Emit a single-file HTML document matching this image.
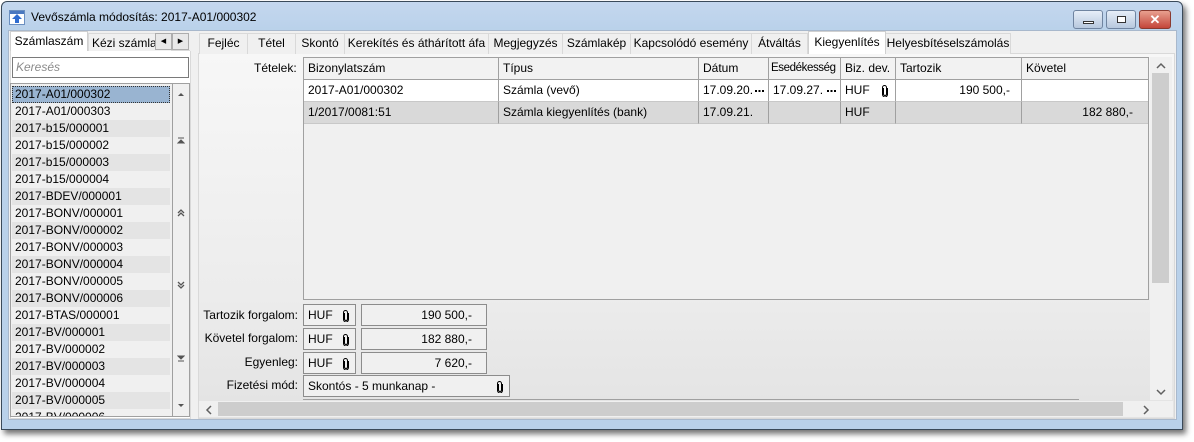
<!DOCTYPE html>
<html><head><meta charset="utf-8"><style>
*{box-sizing:border-box;margin:0;padding:0}
body{width:1194px;height:442px;background:#fff;position:relative;overflow:hidden;font-family:"Liberation Sans",sans-serif;font-size:12px;color:#000}
.a{position:absolute}
.win{left:1px;top:1px;width:1182px;height:429px;border:1px solid #3a4a5a;border-radius:6px 6px 0 0;background:linear-gradient(#c4d7ee,#b9d1ea 30px);box-shadow:3px 4px 6px rgba(0,0,0,.55)}
.client{left:8px;top:30px;width:1169px;height:390px;background:#f0f0f0;border:1px solid #a8b8cc}
.t{white-space:nowrap;line-height:17px}
.tab{position:absolute;top:33px;height:21px;border:1px solid #d9d9d9;border-bottom:none;background:#f0f0f0;text-align:center;line-height:19px;font-size:12px;white-space:nowrap;overflow:hidden}
.item{position:absolute;left:12px;width:158px;height:17px;line-height:17px;padding-left:3px;font-size:12px}
.cell{position:absolute;border-right:1px solid #a0a0a0;border-bottom:1px solid #c8c8c8;padding:0 4px;line-height:21px;height:22px;white-space:nowrap;overflow:hidden}
.box{position:absolute;height:22px;border:1px solid #8c8c8c;background:#f0f0f0;line-height:20px;padding:0 4px;white-space:nowrap}
.lbl{position:absolute;width:100px;text-align:right;left:198px;line-height:22px}
.clip{position:absolute;right:5px;top:5px;width:8px;height:12px}
.dots{position:absolute;right:4px;top:10px;width:9px;height:2px;background:repeating-linear-gradient(90deg,#000 0 2px,transparent 2px 3.5px)}
.sa{position:absolute;left:4px;width:8px;height:8px}
</style></head><body>
<div class="a win"></div>
<svg class="a" style="left:9px;top:9px" width="16" height="16"><rect x="0.5" y="1.5" width="15" height="14" fill="#fff" stroke="#6b8fc0"/><rect x="1" y="2" width="14" height="3" fill="#4a78c0"/><path d="M8 5 L13 10 H10 V14 H6 V10 H3 Z" fill="#2f6cd0"/></svg>
<div class="a t" style="left:31px;top:9px;font-size:12px">Vevőszámla módosítás: 2017-A01/000302</div>
<div class="a" style="left:1073px;top:10px;width:30px;height:19px;border:1px solid #6f84a0;border-radius:3px;background:linear-gradient(#e6eef8,#b7c8de)"><div class="a" style="left:9px;top:10px;width:11px;height:3px;border:1px solid #333;background:#fff"></div></div>
<div class="a" style="left:1106px;top:10px;width:30px;height:19px;border:1px solid #6f84a0;border-radius:3px;background:linear-gradient(#e6eef8,#b7c8de)"><div class="a" style="left:10px;top:5px;width:9px;height:7px;border:1px solid #333;background:#fff"></div></div>
<div class="a" style="left:1139px;top:10px;width:32px;height:19px;border:1px solid #8a3a30;border-radius:3px;background:linear-gradient(#e8a090,#c4463a);color:#fff;font-weight:bold;text-align:center;line-height:17px;font-size:13px">✕</div>
<div class="a client"></div>
<svg width="0" height="0" style="position:absolute"><defs><symbol id="pc" viewBox="0 0 8 12"><path d="M2.5 3 V9 A1.5 1.5 0 0 0 5.5 9 V2.5 A2 2 0 0 0 1.5 2.5 V9.5 A2.5 2.5 0 0 0 6.5 9.5 V3" fill="none" stroke="#000" stroke-width="1"/></symbol></defs></svg>
<!-- left tabs -->
<div class="a" style="left:10px;top:50px;width:180px;height:1px;background:#d9d9d9"></div>
<div class="tab" style="left:88px;width:84px;text-align:left;padding-left:3px;top:33px">Kézi számlas</div>
<div class="tab" style="left:10px;width:78px;top:31px;height:21px;background:#fff;border-color:#d0d0d0">Számlaszám</div>
<div class="a" style="left:155px;top:33px;width:17px;height:17px;border:1px solid #adadad;background:#e8e8e8;font-size:7px;text-align:center;line-height:15px">◀</div>
<div class="a" style="left:172px;top:33px;width:17px;height:17px;border:1px solid #adadad;background:#e8e8e8;font-size:7px;text-align:center;line-height:15px">▶</div>
<div class="a" style="left:10px;top:51px;width:181px;height:368px;background:#fff;border:1px solid #d9d9d9;border-top:none"></div>
<div class="a" style="left:12px;top:57px;width:177px;height:21px;border:1px solid #7a7a7a;background:#fff;color:#8a8a8a;font-style:italic;padding-left:3px;line-height:19px">Keresés</div>
<div class="a" style="left:10px;top:83px;width:180px;height:334px;border:1px solid #a0a0a0;background:#f0f0f0"></div>
<div class="item" style="top:86px;background:#99b4d1;outline:1px dotted #333;outline-offset:-1px">2017-A01/000302</div>
<div class="item" style="top:103px">2017-A01/000303</div>
<div class="item" style="top:120px;background:#e4e4e4">2017-b15/000001</div>
<div class="item" style="top:137px">2017-b15/000002</div>
<div class="item" style="top:154px;background:#e4e4e4">2017-b15/000003</div>
<div class="item" style="top:171px">2017-b15/000004</div>
<div class="item" style="top:188px;background:#e4e4e4">2017-BDEV/000001</div>
<div class="item" style="top:205px">2017-BONV/000001</div>
<div class="item" style="top:222px;background:#e4e4e4">2017-BONV/000002</div>
<div class="item" style="top:239px">2017-BONV/000003</div>
<div class="item" style="top:256px;background:#e4e4e4">2017-BONV/000004</div>
<div class="item" style="top:273px">2017-BONV/000005</div>
<div class="item" style="top:290px;background:#e4e4e4">2017-BONV/000006</div>
<div class="item" style="top:307px">2017-BTAS/000001</div>
<div class="item" style="top:324px;background:#e4e4e4">2017-BV/000001</div>
<div class="item" style="top:341px">2017-BV/000002</div>
<div class="item" style="top:358px;background:#e4e4e4">2017-BV/000003</div>
<div class="item" style="top:375px">2017-BV/000004</div>
<div class="item" style="top:392px;background:#e4e4e4">2017-BV/000005</div>
<div class="item" style="top:409px;height:7px;overflow:hidden;line-height:17px">2017-BV/000006</div>
<div class="a" style="left:172px;top:84px;width:1px;height:332px;background:#a0a0a0"></div>
<div class="a" style="left:173px;top:84px;width:16px;height:332px">
<svg class="sa" style="top:6px" viewBox="0 0 8 8"><path d="M1 6 L4 3 L7 6Z" fill="#555"/></svg>
<svg class="sa" style="top:53px" viewBox="0 0 8 8"><path d="M1 1H7M1 6 L4 3 L7 6Z" stroke="#555" fill="#555"/></svg>
<svg class="sa" style="top:125px" viewBox="0 0 8 8"><path d="M1 4L4 1L7 4M1 7L4 4L7 7" stroke="#555" fill="none" stroke-width="1.3"/></svg>
<svg class="sa" style="top:197px" viewBox="0 0 8 8"><path d="M1 1L4 4L7 1M1 4L4 7L7 4" stroke="#555" fill="none" stroke-width="1.3"/></svg>
<svg class="sa" style="top:270px" viewBox="0 0 8 8"><path d="M1 7H7M1 2 L4 5 L7 2Z" stroke="#555" fill="#555"/></svg>
<svg class="sa" style="top:318px" viewBox="0 0 8 8"><path d="M1 2 L4 5 L7 2Z" fill="#555"/></svg>
</div>
<!-- right tabs -->
<div class="a" style="left:198px;top:53px;width:977px;height:1px;background:#d9d9d9"></div>
<div class="tab" style="left:199px;width:49px">Fejléc</div>
<div class="tab" style="left:247px;width:49px">Tétel</div>
<div class="tab" style="left:295px;width:50px">Skontó</div>
<div class="tab" style="left:344px;width:145px">Kerekítés és áthárított áfa</div>
<div class="tab" style="left:488px;width:75px">Megjegyzés</div>
<div class="tab" style="left:562px;width:69px">Számlakép</div>
<div class="tab" style="left:630px;width:122px">Kapcsolódó esemény</div>
<div class="tab" style="left:751px;width:57px">Átváltás</div>
<div class="tab" style="left:885px;width:126px">Helyesbítéselszámolás</div>
<div class="tab" style="left:808px;width:78px;top:31px;height:23px;background:#fff;border-color:#d0d0d0;line-height:20px">Kiegyenlítés</div>
<div class="a" style="left:198px;top:54px;width:977px;height:365px;border:1px solid #d9d9d9;border-top:none;background:linear-gradient(#f7f7f7,#ececec 240px,#e3e3e3)"></div>
<div class="a t" style="left:254px;top:60px">Tételek:</div>
<!-- grid -->
<div class="a" style="left:303px;top:57px;width:846px;height:243px;border:1px solid #a0a0a0;background:#f0f0f0"></div>
<div class="cell" style="left:304px;top:58px;width:195px;background:#f2f2f2">Bizonylatszám</div>
<div class="cell" style="left:499px;top:58px;width:200px;background:#f2f2f2">Típus</div>
<div class="cell" style="left:699px;top:58px;width:70px;background:#f2f2f2">Dátum</div>
<div class="cell" style="left:769px;top:58px;width:72px;background:#f2f2f2;padding:0 2px;letter-spacing:-0.4px;font-size:11.5px">Esedékesség</div>
<div class="cell" style="left:841px;top:58px;width:55px;background:#f2f2f2">Biz. dev.</div>
<div class="cell" style="left:896px;top:58px;width:126px;background:#f2f2f2">Tartozik</div>
<div class="cell" style="left:1022px;top:58px;width:126px;background:#f2f2f2;border-right:none">Követel</div>
<div class="a" style="left:304px;top:79px;width:844px;height:1px;background:#a0a0a0"></div>
<div class="cell" style="left:304px;top:80px;width:195px;background:#fff">2017-A01/000302</div>
<div class="cell" style="left:499px;top:80px;width:200px;background:#fff">Számla (vevő)</div>
<div class="cell" style="left:699px;top:80px;width:70px;background:#fff">17.09.20.<span class="dots"></span></div>
<div class="cell" style="left:769px;top:80px;width:72px;background:#fff">17.09.27.<span class="dots"></span></div>
<div class="cell" style="left:841px;top:80px;width:55px;background:#fff">HUF <svg class="clip" style="right:6px"><use href="#pc"/></svg></div>
<div class="cell" style="left:896px;top:80px;width:126px;background:#fff;text-align:right;padding-right:11px">190 500,-</div>
<div class="cell" style="left:1022px;top:80px;width:126px;background:#fff;border-right:none"></div>
<div class="cell" style="left:304px;top:102px;width:195px;background:#d9d9d9">1/2017/0081:51</div>
<div class="cell" style="left:499px;top:102px;width:200px;background:#d9d9d9">Számla kiegyenlítés (bank)</div>
<div class="cell" style="left:699px;top:102px;width:70px;background:#d9d9d9">17.09.21.</div>
<div class="cell" style="left:769px;top:102px;width:72px;background:#d9d9d9"></div>
<div class="cell" style="left:841px;top:102px;width:55px;background:#d9d9d9">HUF</div>
<div class="cell" style="left:896px;top:102px;width:126px;background:#d9d9d9"></div>
<div class="cell" style="left:1022px;top:102px;width:126px;background:#d9d9d9;border-right:none;text-align:right;padding-right:15px">182 880,-</div>
<!-- vscroll -->
<div class="a" style="left:1150px;top:57px;width:22px;height:343px;background:#f0f0f0"></div>
<div class="a" style="left:1152px;top:73px;width:17px;height:210px;background:#cdcdcd"></div>
<svg class="a" style="left:1156px;top:62px" width="10" height="8"><path d="M1 6L5 2L9 6" stroke="#606060" stroke-width="1.5" fill="none"/></svg>
<svg class="a" style="left:1156px;top:388px" width="10" height="8"><path d="M1 2L5 6L9 2" stroke="#606060" stroke-width="1.5" fill="none"/></svg>
<!-- fields -->
<div class="lbl" style="top:304px">Tartozik forgalom:</div>
<div class="lbl" style="top:327px">Követel forgalom:</div>
<div class="lbl" style="top:351px">Egyenleg:</div>
<div class="lbl" style="top:374px">Fizetési mód:</div>
<div class="box" style="left:303px;top:304px;width:53px">HUF<svg class="clip"><use href="#pc"/></svg></div>
<div class="box" style="left:361px;top:304px;width:126px;text-align:right;padding-right:14px">190 500,-</div>
<div class="box" style="left:303px;top:328px;width:53px">HUF<svg class="clip"><use href="#pc"/></svg></div>
<div class="box" style="left:361px;top:328px;width:126px;text-align:right;padding-right:14px">182 880,-</div>
<div class="box" style="left:303px;top:352px;width:53px">HUF<svg class="clip"><use href="#pc"/></svg></div>
<div class="box" style="left:361px;top:352px;width:126px;text-align:right;padding-right:14px">7 620,-</div>
<div class="box" style="left:303px;top:375px;width:207px">Skontós - 5 munkanap -<svg class="clip"><use href="#pc"/></svg></div>
<div class="a" style="left:303px;top:399px;width:776px;height:1px;background:#a0a0a0"></div>
<!-- hscroll -->
<div class="a" style="left:199px;top:401px;width:974px;height:16px;background:#f0f0f0"></div>
<div class="a" style="left:218px;top:402px;width:905px;height:14px;background:#cdcdcd"></div>
<svg class="a" style="left:205px;top:405px" width="8" height="10"><path d="M6 1L2 5L6 9" stroke="#606060" stroke-width="1.5" fill="none"/></svg>
<svg class="a" style="left:1142px;top:405px" width="8" height="10"><path d="M2 1L6 5L2 9" stroke="#606060" stroke-width="1.5" fill="none"/></svg>
</body></html>
